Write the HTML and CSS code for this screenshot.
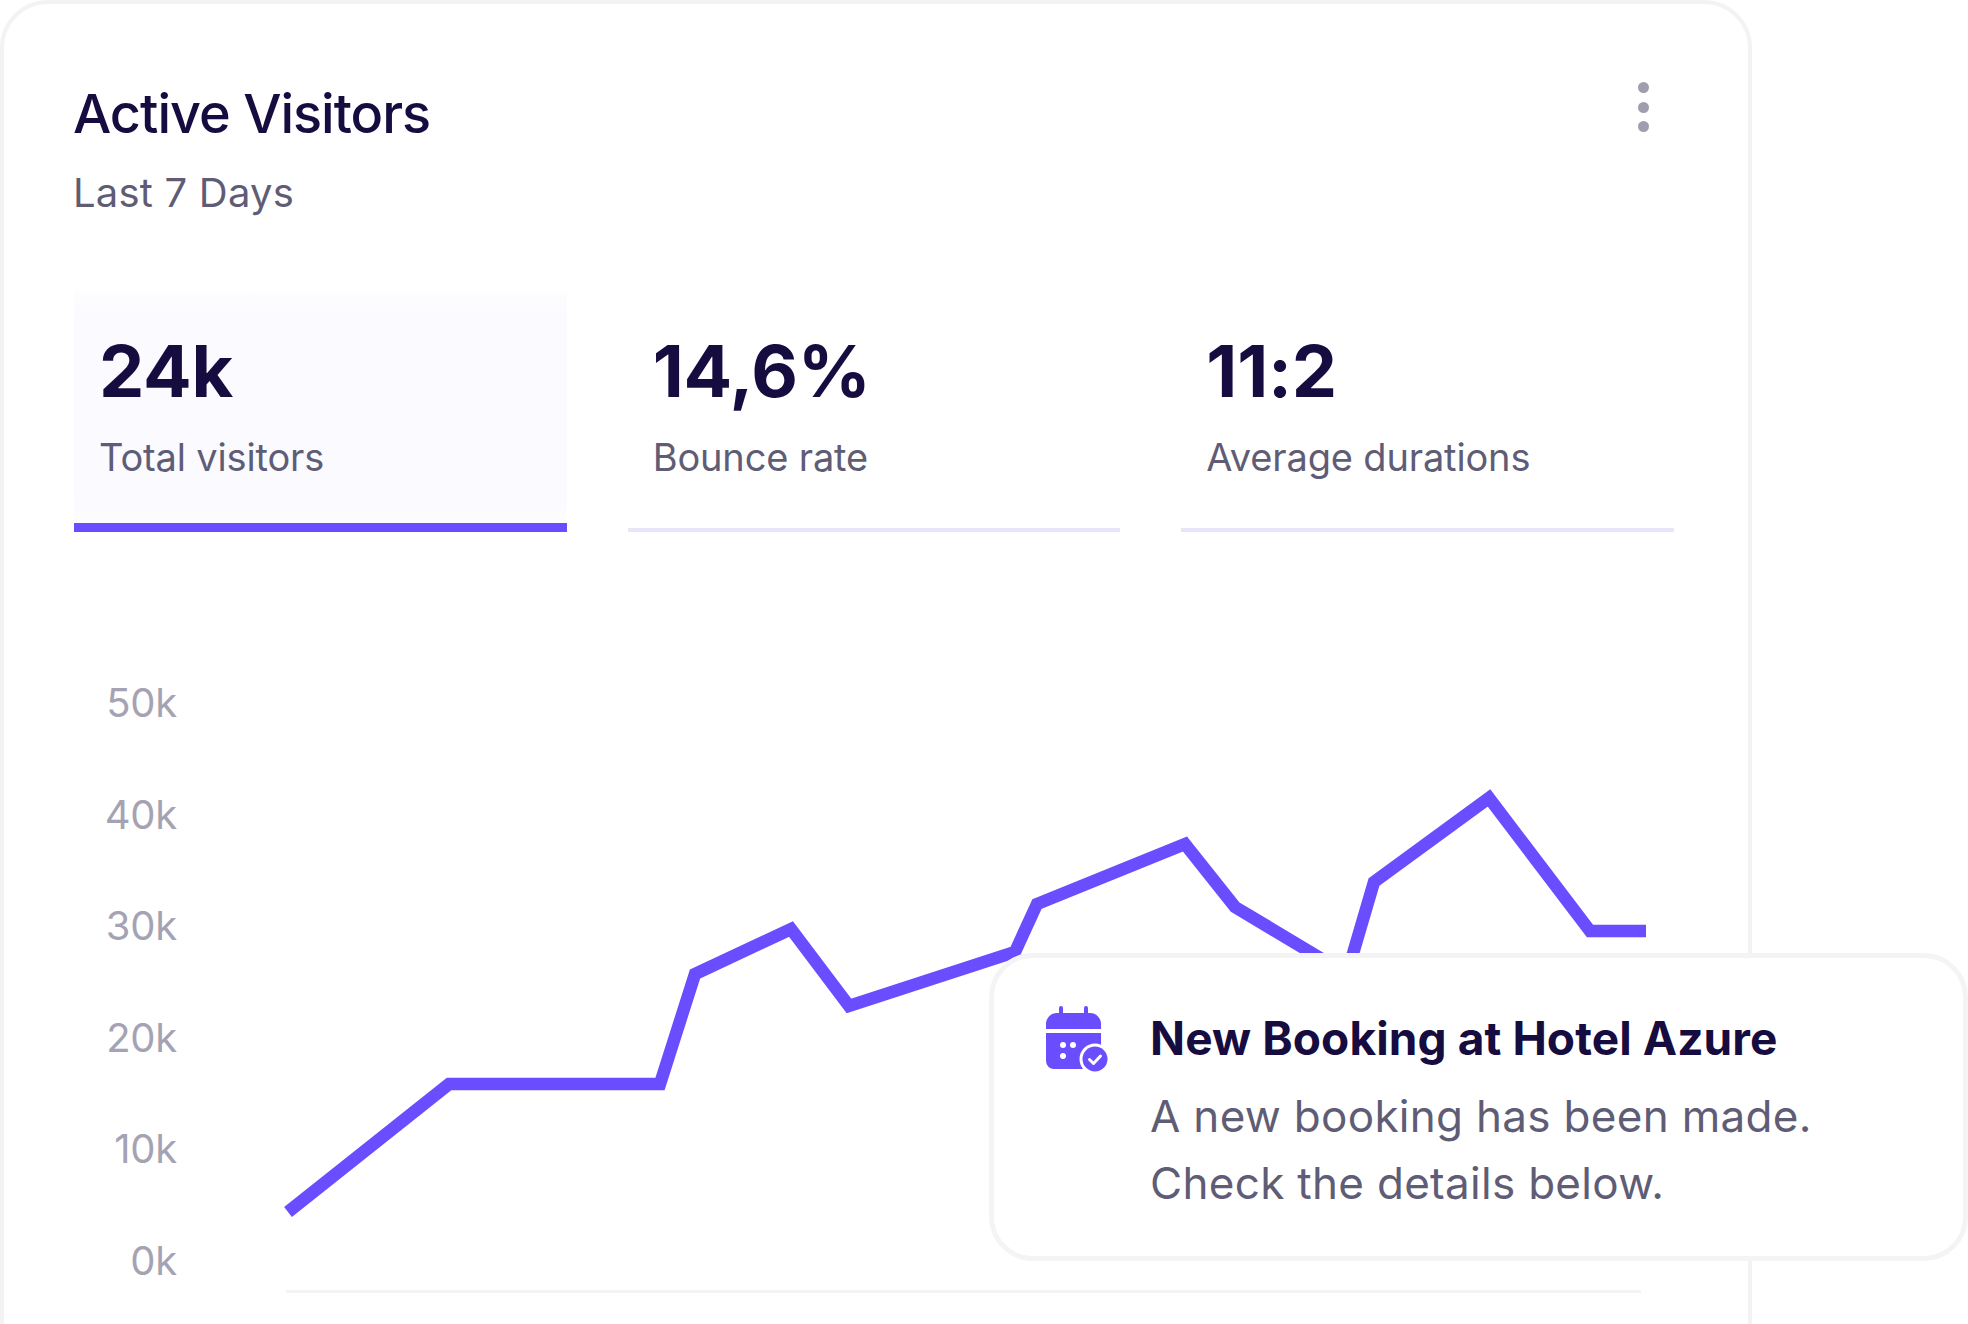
FILE: index.html
```html
<!DOCTYPE html>
<html lang="en">
<head>
    <meta charset="UTF-8">
    <meta name="viewport" content="width=device-width, initial-scale=1.0">
    <title>Active Visitors</title>
    <link rel="stylesheet" href="styles.css">
</head>
<body>
    <section class="card">
        <div class="card-head">
            <div>
                <h1 class="card-title">Active Visitors</h1>
                <p class="card-sub">Last 7 Days</p>
            </div>
            <div class="more"><span></span><span></span><span></span></div>
        </div>

        <div class="stats">
            <div class="stat active">
                <div class="stat-num">24k</div>
                <div class="stat-label">Total visitors</div>
            </div>
            <div class="stat">
                <div class="stat-num">14,6%</div>
                <div class="stat-label">Bounce rate</div>
            </div>
            <div class="stat">
                <div class="stat-num">11:2</div>
                <div class="stat-label">Average durations</div>
            </div>
        </div>

        <div class="chart">
            <div class="y-axis">
                <span>50k</span>
                <span>40k</span>
                <span>30k</span>
                <span>20k</span>
                <span>10k</span>
                <span>0k</span>
            </div>
            <svg class="plot" viewBox="280 678 1370 620" width="1370" height="620">
                <line x1="286" y1="1290.5" x2="1641" y2="1290.5" stroke="#f3f3f5" stroke-width="3"/>
                <polyline fill="none" stroke="#6a4dff" stroke-width="12.5" stroke-miterlimit="10"
                    points="288,1211 449,1083 660,1083 695,973 791,928 849,1005 1015,951 1037,903 1185,843 1235,906 1347,973 1374,881 1489,797 1590,930 1646,930"/>
            </svg>
        </div>
    </section>

    <!-- notification floats over the chart -->
    <aside class="toast">
        <svg class="toast-icon" viewBox="1046 1004 64 68" width="64" height="68">
            <rect x="1059" y="1006" width="4" height="12" rx="2" fill="#6a4dff"/>
            <rect x="1084" y="1006" width="4" height="12" rx="2" fill="#6a4dff"/>
            <path d="M1046 1029v-5a11 11 0 0 1 11-11h33a11 11 0 0 1 11 11v5z" fill="#6a4dff"/>
            <path d="M1046 1033h55v28a8 8 0 0 1-8 8h-39a8 8 0 0 1-8-8z" fill="#6a4dff"/>
            <circle cx="1063" cy="1045" r="3" fill="#fff"/>
            <circle cx="1073" cy="1045" r="3" fill="#fff"/>
            <circle cx="1063" cy="1056" r="3" fill="#fff"/>
            <circle cx="1095" cy="1059" r="15.5" fill="#fff"/>
            <circle cx="1095" cy="1059" r="12.5" fill="#6a4dff"/>
            <path d="M1089.5 1059.5l4 4 7-7.5" fill="none" stroke="#fff" stroke-width="3" stroke-linecap="round" stroke-linejoin="round"/>
        </svg>
        <div class="toast-body">
            <h2 class="toast-title">New Booking at Hotel Azure</h2>
            <p class="toast-text">A new booking has been made.<br>Check the details below.</p>
        </div>
    </aside>
</body>
</html>
```

FILE: styles.css
```css
html, body{
    margin: 0;
    height: 100%;
    overflow: hidden;
    background-color: #fff;
}
body{
    position: relative;
    font-family: "Inter", "Liberation Sans", sans-serif;
    color: #160c40;
}
h1, h2, p{
    margin: 0;
}
.card{
    width: 1752px;
    height: 1400px;
    box-sizing: border-box;
    padding: 80px 74px 0 70px;
    background-color: #fff;
    border: 4px solid #f3f3f5;
    border-radius: 48px;
}
.card-head{
    display: flex;
    justify-content: space-between;
    align-items: flex-start;
}
.card-title{
    margin-left: -1px;
    font-size: 54px;
    line-height: 60px;
    font-weight: 500;
    letter-spacing: -1px;
}
.card-sub{
    margin: 25px 0 0 -1px;
    font-size: 40px;
    line-height: 48px;
    color: #5f5d76;
    letter-spacing: 0.2px;
}
.more{
    display: flex;
    flex-direction: column;
    gap: 8.5px;
    margin: -2px 25px 0 0;
}
.more span{
    width: 11px;
    height: 11px;
    border-radius: 50%;
    background-color: #a09eae;
}
.stats{
    display: flex;
    gap: 61px;
    margin-top: 74px;
}
.stat{
    flex: 1;
    height: 241px;
    box-sizing: border-box;
    padding: 40px 0 0 25px;
    border-bottom: 4px solid #e7e5f8;
}
.stat.active{
    background-image: linear-gradient(#fdfdff, #fafaff 20%, #fafaff 85%, #fdfdff);
    border-bottom: 9px solid #6a4dff;
}
.stat-num{
    font-size: 72px;
    line-height: 80px;
    font-weight: 700;
    letter-spacing: -0.25px;
}
.stat-label{
    margin-top: 22px;
    font-size: 38px;
    line-height: 48px;
    color: #5f5d76;
    letter-spacing: -0.15px;
}
.chart{
    display: flex;
    margin-top: 147px;
}
.y-axis{
    display: flex;
    flex-direction: column;
    align-items: flex-end;
    gap: 63.6px;
    width: 103px;
    flex-shrink: 0;
    font-size: 40px;
    line-height: 48px;
    color: #a5a3b3;
    letter-spacing: -0.25px;
}
.plot{
    display: block;
    margin-left: 103px;
}
.toast{
    position: absolute;
    left: 989px;
    top: 953px;
    width: 979px;
    height: 308px;
    box-sizing: border-box;
    display: flex;
    gap: 40px;
    padding: 46px 0 0 52px;
    background-color: #fff;
    border: 5px solid #f4f4f6;
    border-radius: 44px;
}
.toast-icon{
    display: block;
    flex-shrink: 0;
}
.toast-body{
    padding-top: 6px;
}
.toast-title{
    font-size: 46px;
    line-height: 56px;
    font-weight: 700;
    letter-spacing: 0.1px;
}
.toast-text{
    margin-top: 16.5px;
    font-size: 44px;
    line-height: 67.5px;
    color: #5f5d76;
    letter-spacing: 0.3px;
}
```
